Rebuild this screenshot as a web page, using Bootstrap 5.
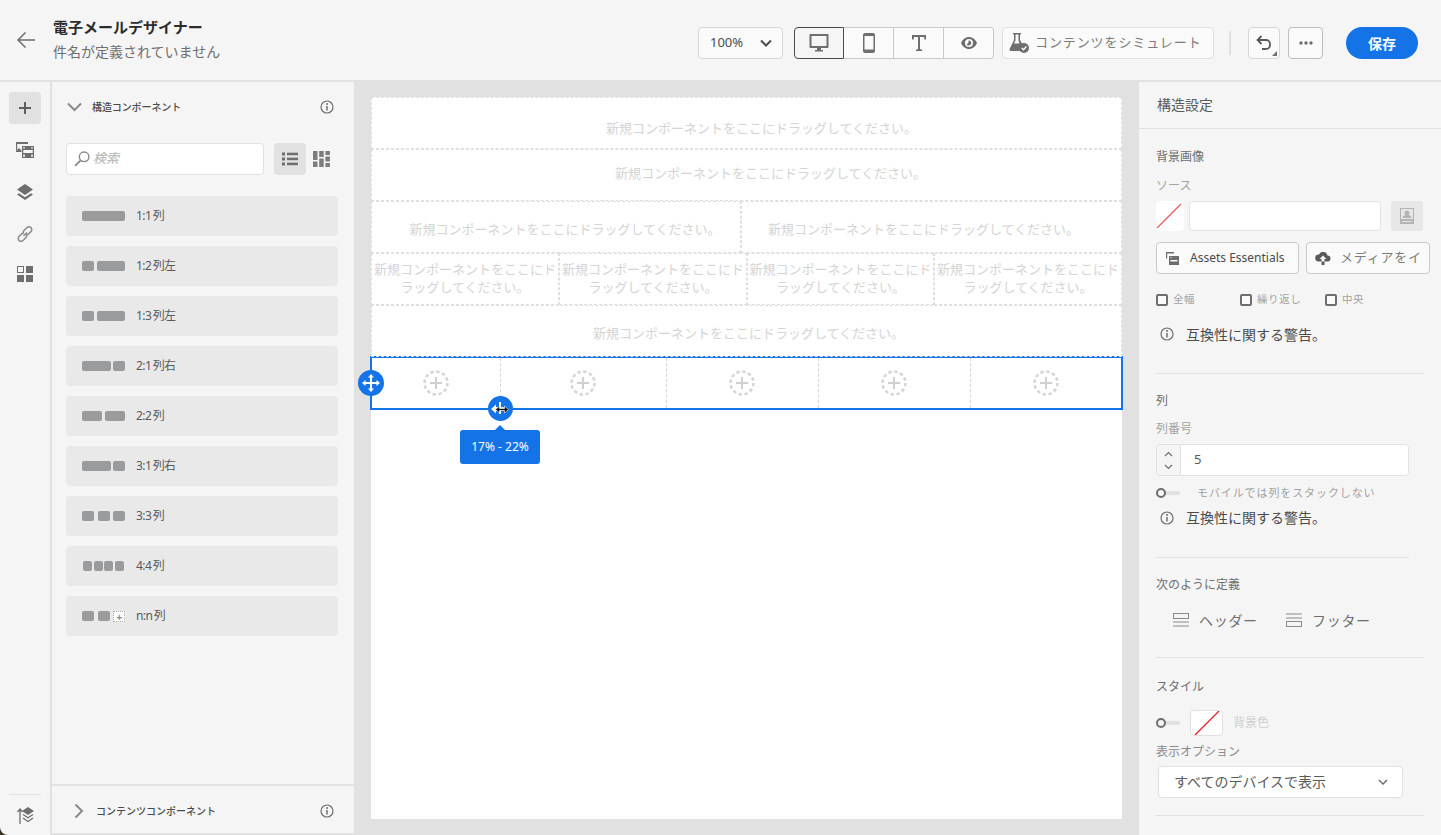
<!DOCTYPE html>
<html lang="ja">
<head>
<meta charset="utf-8">
<title>電子メールデザイナー</title>
<link href="https://cdn.jsdelivr.net/npm/bootstrap@5.3.0/dist/css/bootstrap.min.css" rel="stylesheet">
<style>
html,body{margin:0;height:835px;overflow:hidden;background:#3a3428}
body{font-family:"Noto Sans","Noto Sans CJK JP",sans-serif;color:#4b4b4b}
.shell{width:1441px;height:835px;overflow:hidden;background:#f5f5f5;position:relative;border-bottom-left-radius:8px}
svg{display:block;flex:none}
.ic{fill:#6e6e6e}
.topbar{height:82px;border-bottom:2px solid #e1e1e1;padding:0 23px 0 16px}
.backlink{width:20px;margin:0 17px 0 0}
.ttl{font-size:15px;line-height:20px;font-weight:700;color:#2c2c2c;margin-top:-2px}
.subttl{font-size:14px;line-height:20px;color:#6e6e6e;margin-top:5px}
.toolwrap{margin-top:6px}
.tbtn{height:32px;padding:0;border:2px solid #d6d6d6;border-radius:4px;background:#fafafa;color:#4b4b4b;display:flex;align-items:center;justify-content:center;font-size:13px}
.zoomsel{width:85px;margin-left:0;justify-content:space-between;padding:0 10px 0 11px;border-width:1px}
.segs{margin-left:11px;display:flex}
.segs .tbtn{width:50px;border-radius:0;border-width:1px 1px 1px 0;border-color:#cacaca}
.segs .tbtn:first-child{border:1px solid #4b4b4b;border-radius:4px 0 0 4px;background:#f5f5f5}
.segs .tbtn:last-child{border-radius:0 4px 4px 0}
.simbtn{width:212px;margin-left:8px;border-width:1px;border-color:#e1e1e1;color:#7b7b7b;gap:6px;letter-spacing:.9px;justify-content:flex-start;padding-left:6px}
.vsep{width:2px;height:24px;background:#e1e1e1;margin:0 17px 0 15px}
.undo{width:32px;position:relative;border-width:1px}
.undo:after{content:"";position:absolute;right:2px;bottom:2px;border:solid transparent;border-width:0 0 5px 5px;border-bottom-color:#6e6e6e}
.morebtn{width:35px;margin-left:8px;border-width:1px;border-color:#bdbdbd}
.savebtn{width:72px;height:32px;margin-left:23px;padding:0;background:#1473e6;color:#fff;border:0;border-radius:16px;font-size:14px;font-weight:700}
.work{height:753px}
.railcol{width:52px;border-right:2px solid #e1e1e1;padding-top:10px}
.railbtn{width:32px;height:32px;margin:0 auto;display:flex;align-items:center;justify-content:center;border-radius:4px}
.railbtn.on{background:#e1e1e1}
.railgap{margin-top:10px}
.railgap8{margin-top:8px}
.rail-sep{width:32px;height:1px;background:#e1e1e1;margin:0 auto 4px}
.leftcol{width:303px;height:753px;border-right:1px solid #e1e1e1;border-bottom:2px solid #e1e1e1}
.sechead{height:52px;padding:0 20px 2px 15px;font-size:10px;font-weight:500;color:#4b4b4b;letter-spacing:-.1px}
.chev{margin-right:10px}
.searchrow{padding:9px 16px 0 14px;margin-bottom:21px}
.searchbox{width:198px;height:32px;background:#fff;border:1px solid #e1e1e1;border-radius:4px;padding:0 7px;color:#b3b3b3;font-size:13px;font-style:italic;gap:3px}
.viewbtn{width:32px;height:32px;border-radius:4px;margin-left:10px}
.viewbtn.on{background:#e1e1e1}
.viewalt{margin-left:7px}
.colitem{height:40px;width:272px;margin:0 0 10px 14px;background:#e9e9e9;border-radius:4px;padding-left:16px;font-size:12px;color:#5a5a5a;letter-spacing:-.6px;word-spacing:-1px}
.thumb{width:43px;margin-right:11px;display:flex;justify-content:space-between;height:10px}
.thumb4{padding:0 1px}
.thumb i{display:block;height:10px;background:#999b9c;border-radius:2px}
.w43{width:43px}.w29{width:28.5px}.w12{width:12px}.w9{width:9px}.w20{width:20px}
.addcell{width:12px;height:11px;background:#fff;border:1px dotted #aaa;display:flex;align-items:center;justify-content:center;color:#888;font-size:10px;line-height:1;font-weight:700}
.leftfoot{border-top:2px solid #e1e1e1;height:49px;padding:3px 20px 0 22px;font-size:10px;font-weight:500;color:#4b4b4b}
.footchev{margin-right:12px}
.canvas{width:784px;height:753px;background:#e1e1e1;padding:15px 16px 16px;position:relative}
.sheet{background:#fff;height:722px;width:751px}
.droprow{display:flex;height:52px}
.dropcell{flex:1 1 0;min-width:0;border:1px dashed #dfdfdf;display:flex;align-items:center;justify-content:center;text-align:center;color:#d4d4d4;font-size:13px;line-height:18px}
.p-a{padding:9px 0 0 30px}.p-b{padding:0 0 4px 48px}.p-c{padding:4px 0 0 18px}.p-d{padding:4px 16px 0 0}.p-e{padding:4px 0 0 4px}.p-f{padding:0 0 2px}
.narrow{flex:0 0 auto}
.c187{width:187px}.c188{width:188px}
.c370{width:370px}
.selrow{display:flex;height:54px;margin:-1px 0 0 -1px;width:753px;border:2px solid #1473e6}
.plcell{border-right:1px dashed #d4d4d4;display:flex;align-items:center;justify-content:center}
.plcell:last-child{border-right:0}
.c127{width:129px}.c166{width:166px;padding-right:2px}.c152{width:152px;padding-right:2px}.c150{flex:1 1 0}
.handle{position:absolute;background:#1473e6;border-radius:50%;display:flex;align-items:center;justify-content:center}
.h-move{left:3px;top:288px;width:26px;height:26px}
.h-size{left:133px;top:314px;width:25px;height:25px}
.tipbox{position:absolute;left:105px;top:348px;width:80px;height:34px;border-radius:3px;background:#1473e6;color:#fff;font-size:12px;display:flex;align-items:center;justify-content:center}
.tipbox:before{content:"";position:absolute;left:35px;top:-5px;border:solid transparent;border-width:0 5px 5px 5px;border-bottom-color:#1473e6}
.rightcol{width:302px;height:753px;overflow:hidden;position:relative}
.rhead{height:47px;border-bottom:1px solid #e1e1e1;padding-left:18px;font-size:14px;line-height:46px;color:#5a5a5a}
.rbody{padding-left:17px}
.lab{font-size:12px;line-height:18px;color:#6e6e6e}
.lab2{font-size:12px;line-height:18px;color:#a3a3a3}
.labdim{color:#cfcfcf;margin-left:10px}
.labmid{color:#8a8a8a}
.sp5{margin-top:5px}.sp6{margin-top:6px}.sp7{margin-top:7px}.sp9{margin-top:9px}.sp10{margin-top:10px}.sp11{margin-top:11px}.sp14{margin-top:14px}.sp16{margin-top:16px}.sp17{margin-top:17px}.sp18{margin-top:18px}.sp19{margin-top:19px}.sp20{margin-top:20px}.sp26{margin-top:26px}.sp29{margin-top:29px}
.swatch{width:28px;height:30px;background:#fff;border-radius:4px}
.urlbox{width:192px;height:30px;margin-left:5px;background:#fff;border:1px solid #e1e1e1;border-radius:4px;padding:0}
.imgbtn{width:32px;height:30px;margin-left:10px;background:#e7e7e7;border-radius:4px}
.assetbtn{height:32px;width:143px;border:1px solid #cacaca;border-radius:4px;background:#fafafa;font-size:12px;color:#4b4b4b;gap:11px;padding:0 0 0 9px}
.mediabtn{height:32px;width:124px;margin-left:7px;border:1px solid #cacaca;border-radius:4px;background:#fafafa;font-size:13px;color:#7b7b7b;gap:9px;padding:0 0 0 8px;white-space:nowrap;letter-spacing:.8px}
.chk{width:12px;height:12px;border:2px solid #6e6e6e;border-radius:2px;margin-right:5px;background:#fafafa}
.chkl{font-size:10.5px;color:#a3a3a3;height:16px;letter-spacing:.6px}
.ck84{width:84px}.ck85{width:85px}
.warn{height:20px;padding-left:4px;font-size:14px;color:#4b4b4b;gap:12px}
.hrule{height:1px;background:#e1e1e1}
.w268{width:268px}.w253{width:253px}
.numbox{width:253px;height:32px;border:1px solid #e1e1e1;border-radius:4px;overflow:hidden}
.numsp{width:24px;background:#f5f5f5;border-right:1px solid #e1e1e1;padding:5px 0;gap:7px}
.numv{background:#fff;font-size:13px;padding-left:13px;color:#5a5a5a}
.togl{width:24px;height:14px;position:relative}
.togl:before{content:"";position:absolute;left:4px;right:0;top:5px;height:4px;border-radius:2px;background:#e1e1e1}
.togl:after{content:"";position:absolute;left:0;top:2px;width:10px;height:10px;border-radius:50%;border:2.5px solid #6e6e6e;background:#f5f5f5}
.togtxt{font-size:11px;color:#a3a3a3;margin-left:17px;letter-spacing:.9px}
.defrow{padding-left:17px}
.deftxt{font-size:14px;color:#6e6e6e;letter-spacing:.7px;margin-left:10px}
.hdrtxt{width:87px}
.stylesw{width:33px;height:26px;margin-left:10px;background:#fff;border:1px solid #e1e1e1;border-radius:4px}
.sel{width:245px;height:32px;margin-left:2px;background:#fff;border:1px solid #e1e1e1;border-radius:4px;padding:0 14px 0 15px;font-size:14px;color:#5a5a5a}
</style>
</head>
<body>
<div class="shell d-flex flex-column">

<header class="topbar d-flex align-items-center">
  <a class="backlink" aria-label="戻る"><svg width="20" height="18" viewBox="0 0 20 18"><path d="M19 9H2M9.500 1.500 2 9l7.500 7.500" fill="none" stroke="#6e6e6e" stroke-width="1.500"/></svg></a>
  <div class="flex-grow-1">
    <div class="ttl">電子メールデザイナー</div>
    <div class="subttl">件名が定義されていません</div>
  </div>
  <div class="toolwrap d-flex align-items-center">
  <button class="btn tbtn zoomsel" type="button"><span>100%</span><svg width="12" height="8" viewBox="0 0 12 8"><path d="M1 1.500 6 6.500l5-5" fill="none" stroke="#4b4b4b" stroke-width="2"/></svg></button>
  <div class="segs">
    <button class="btn tbtn" type="button" aria-label="デスクトップ"><svg width="20" height="18" viewBox="0 0 20 18"><path class="ic" fill-rule="evenodd" d="M1.500 0h17a1 1 0 0 1 1 1v12a1 1 0 0 1-1 1H12v2h2v1.500H6V16h2v-2H1.500a1 1 0 0 1-1-1V1a1 1 0 0 1 1-1Zm1 2v10h15V2Z"/></svg></button>
    <button class="btn tbtn" type="button" aria-label="モバイル"><svg width="12" height="20" viewBox="0 0 12 20"><path class="ic" fill-rule="evenodd" d="M2 0h8a2 2 0 0 1 2 2v16a2 2 0 0 1-2 2H2a2 2 0 0 1-2-2V2a2 2 0 0 1 2-2Zm-.5 3v13.500h9V3Z"/></svg></button>
    <button class="btn tbtn" type="button" aria-label="テキスト"><svg width="16" height="18" viewBox="0 0 16 18"><path class="ic" d="M1 1h14v4.500h-1.600L13 3H9v12l2 .8V17H5v-1.200l2-.8V3H3L2.600 5.500H1Z"/></svg></button>
    <button class="btn tbtn" type="button" aria-label="プレビュー"><svg width="16" height="12" viewBox="0 0 16 12"><path class="ic" fill-rule="evenodd" d="M8 0c3.500 0 6.500 2.500 8 6-1.500 3.500-4.500 6-8 6S1.500 9.500 0 6c1.500-3.500 4.500-6 8-6Zm0 2a4 4 0 1 0 0 8 4 4 0 0 0 0-8Zm-.5 1.500a2.500 2.500 0 1 1-2 3.500c1 .2 2.400-.8 2-3.500Z"/></svg></button>
  </div>
  <button class="btn tbtn simbtn" type="button"><svg width="20" height="20" viewBox="0 0 20 20"><path class="ic" d="M4 0h8v1.500h-1V7l2.500 4.500a5 5 0 0 0-2 6.500H2a1.500 1.500 0 0 1-1.300-2.200L5 7V1.500H4Zm2.500 1.500v6L5 10.500h5.500L9.500 7.500v-6Z" fill-rule="evenodd"/><circle cx="15" cy="15" r="5" fill="#6e6e6e"/><path d="m12.800 15 1.700 1.700 2.900-3.200" fill="none" stroke="#fff" stroke-width="1.300"/></svg><span>コンテンツをシミュレート</span></button>
  <div class="vsep"></div>
  <button class="btn tbtn undo" type="button" aria-label="元に戻す"><svg width="16" height="16" viewBox="0 0 16 16"><path d="M5.500 1 1.500 5l4 4M2 5h8a4 4 0 0 1 4 4v1a4 4 0 0 1-4 4H6" fill="none" stroke="#5a5a5a" stroke-width="1.800"/></svg></button>
  <button class="btn tbtn morebtn" type="button" aria-label="その他"><svg width="14" height="4" viewBox="0 0 14 4"><circle cx="2" cy="2" r="1.700" fill="#6e6e6e"/><circle cx="7" cy="2" r="1.700" fill="#6e6e6e"/><circle cx="12" cy="2" r="1.700" fill="#6e6e6e"/></svg></button>
  <button class="btn savebtn" type="button">保存</button>
  </div>
</header>

<div class="work d-flex">
  <nav class="railcol d-flex flex-column">
    <div class="railbtn on"><svg width="14" height="14" viewBox="0 0 14 14"><path d="M7 1v12M1 7h12" stroke="#5f5f5f" stroke-width="2"/></svg></div>
    <div class="railbtn railgap"><svg width="18" height="16" viewBox="0 0 18 16"><path class="ic" d="M0 0h12v2H1.200v5.500L0 9Z"/><path class="ic" d="M0 9l3-3 2.500 2.500V10H0Z"/><path class="ic" fill-rule="evenodd" d="M6 4h12v12H6Zm1.300 1v1.500h1.500V5Zm0 3v3h9.400V8Zm0 4.500V15h1.500v-2.500Zm8 0V15h1.400v-2.500Zm0-7.500v1.500h1.400V5Z"/></svg></div>
    <div class="railbtn railgap"><svg width="16" height="16" viewBox="0 0 16 16"><path class="ic" d="M8 0l8 5.500-8 5.500-8-5.500Z"/><path class="ic" d="M2 9.200l6 4.100 6-4.100 2 1.300L8 16l-8-5.500Z"/></svg></div>
    <div class="railbtn railgap"><svg width="18" height="18" viewBox="0 0 18 18"><path d="M7.500 11 11 7.500M6.500 8 2.500 12a3 3 0 0 0 4 4l3.500-3.500a3 3 0 0 0 .5-3.500M11.500 10l4-4a3 3 0 0 0-4-4L8 5.500a3 3 0 0 0-.5 3.500" fill="none" stroke="#8a8a8a" stroke-width="1.500"/></svg></div>
    <div class="railbtn railgap8"><svg width="16" height="16" viewBox="0 0 16 16"><rect x=".5" y=".5" width="6" height="6" fill="none" stroke="#6e6e6e"/><rect x="9" width="7" height="7" class="ic"/><rect y="9" width="7" height="7" class="ic"/><rect x="9" y="9" width="7" height="7" class="ic"/></svg></div>
    <div class="mt-auto pb-1">
      <div class="rail-sep"></div>
      <div class="railbtn"><svg width="17" height="17" viewBox="0 0 17 17"><path d="M3 17V3M.5 5 3 2l2.500 3" fill="none" stroke="#6e6e6e" stroke-width="1.300"/><path class="ic" d="M11 0l6 4-6 4-6-4Z"/><path d="m6 7.500 5 3.300 5-3.300M6 11l5 3.500 5-3.500" fill="none" stroke="#6e6e6e" stroke-width="1.300"/></svg></div>
    </div>
  </nav>

  <aside class="leftcol d-flex flex-column">
    <div class="sechead d-flex align-items-center">
      <svg class="chev" width="15" height="10" viewBox="0 0 15 10"><path d="M1 1.500 7.500 8 14 1.500" fill="none" stroke="#8a8a8a" stroke-width="2"/></svg>
      <span class="flex-grow-1">構造コンポーネント</span>
      <svg width="14" height="14" viewBox="0 0 14 14"><circle cx="7" cy="7" r="6" fill="none" stroke="#6e6e6e" stroke-width="1.200"/><path d="M7 6v4.500" stroke="#6e6e6e" stroke-width="1.500"/><circle cx="7" cy="4" r="1" fill="#6e6e6e"/></svg>
    </div>
    <div class="searchrow d-flex align-items-center">
      <div class="searchbox d-flex align-items-center">
        <svg width="16" height="16" viewBox="0 0 15 15"><circle cx="9.500" cy="5.500" r="4.500" fill="none" stroke="#8a8a8a" stroke-width="1.300"/><path d="M6 9 1 14" stroke="#8a8a8a" stroke-width="1.800"/></svg>
        <span>検索</span>
      </div>
      <div class="viewbtn on d-flex align-items-center justify-content-center"><svg width="16" height="14" viewBox="0 0 16 14"><g fill="#6e6e6e"><rect width="3" height="3" y=".5"/><rect x="5" width="11" height="2.500" y=".7"/><rect width="3" height="3" y="5.500"/><rect x="5" width="11" height="2.500" y="5.700"/><rect width="3" height="3" y="10.500"/><rect x="5" width="11" height="2.500" y="10.700"/></g></svg></div>
      <div class="viewalt"><svg width="17" height="16" viewBox="0 0 17 16"><g fill="#7c7c7c"><rect width="4.500" height="9"/><rect x="6.200" width="4.500" height="6"/><rect x="12.400" width="4.500" height="4"/><rect y="10.500" width="4.500" height="5.500"/><rect x="6.200" y="7.500" width="4.500" height="8.500"/><rect x="12.400" y="5.500" width="4.500" height="5"/><rect x="12.400" y="12" width="4.500" height="4"/></g></svg></div>
    </div>
    <div class="colitem d-flex align-items-center"><div class="thumb"><i class="w43"></i></div><span>1:1 列</span></div>
    <div class="colitem d-flex align-items-center"><div class="thumb"><i class="w12"></i><i class="w29"></i></div><span>1:2 列左</span></div>
    <div class="colitem d-flex align-items-center"><div class="thumb"><i class="w12"></i><i class="w29"></i></div><span>1:3 列左</span></div>
    <div class="colitem d-flex align-items-center"><div class="thumb"><i class="w29"></i><i class="w12"></i></div><span>2:1 列右</span></div>
    <div class="colitem d-flex align-items-center"><div class="thumb"><i class="w20"></i><i class="w20"></i></div><span>2:2 列</span></div>
    <div class="colitem d-flex align-items-center"><div class="thumb"><i class="w29"></i><i class="w12"></i></div><span>3:1 列右</span></div>
    <div class="colitem d-flex align-items-center"><div class="thumb"><i class="w12"></i><i class="w12"></i><i class="w12"></i></div><span>3:3 列</span></div>
    <div class="colitem d-flex align-items-center"><div class="thumb thumb4"><i class="w9"></i><i class="w9"></i><i class="w9"></i><i class="w9"></i></div><span>4:4 列</span></div>
    <div class="colitem d-flex align-items-center"><div class="thumb"><i class="w12"></i><i class="w12"></i><span class="addcell">+</span></div><span>n:n 列</span></div>
    <div class="leftfoot mt-auto d-flex align-items-center">
      <svg class="footchev" width="10" height="16" viewBox="0 0 10 16"><path d="M1.500 1.500 8 8l-6.500 6.500" fill="none" stroke="#8a8a8a" stroke-width="2"/></svg>
      <span class="flex-grow-1">コンテンツコンポーネント</span>
      <svg width="14" height="14" viewBox="0 0 14 14"><circle cx="7" cy="7" r="6" fill="none" stroke="#6e6e6e" stroke-width="1.200"/><path d="M7 6v4.500" stroke="#6e6e6e" stroke-width="1.500"/><circle cx="7" cy="4" r="1" fill="#6e6e6e"/></svg>
    </div>
  </aside>

  <main class="canvas">
    <div class="sheet">
      <div class="droprow"><div class="dropcell p-a">新規コンポーネントをここにドラッグしてください。</div></div>
      <div class="droprow"><div class="dropcell p-b">新規コンポーネントをここにドラッグしてください。</div></div>
      <div class="droprow"><div class="dropcell narrow c370 p-c">新規コンポーネントをここにドラッグしてください。</div><div class="dropcell p-d">新規コンポーネントをここにドラッグしてください。</div></div>
      <div class="droprow"><div class="dropcell narrow c188 p-f">新規コンポーネントをここにドラッグしてください。</div><div class="dropcell narrow c188 p-f">新規コンポーネントをここにドラッグしてください。</div><div class="dropcell narrow c187 p-f">新規コンポーネントをここにドラッグしてください。</div><div class="dropcell p-f">新規コンポーネントをここにドラッグしてください。</div></div>
      <div class="droprow"><div class="dropcell p-e">新規コンポーネントをここにドラッグしてください。</div></div>
      <div class="selrow">
        <div class="plcell c127"><svg width="26" height="26" viewBox="0 0 26 26"><circle cx="13" cy="13" r="11.500" fill="none" stroke="#d6d6d6" stroke-width="2.500" stroke-dasharray="3.500 2.500"/><path d="M13 7v12M7 13h12" stroke="#cfcfcf" stroke-width="2"/></svg></div>
        <div class="plcell c166"><svg width="26" height="26" viewBox="0 0 26 26"><circle cx="13" cy="13" r="11.500" fill="none" stroke="#d6d6d6" stroke-width="2.500" stroke-dasharray="3.500 2.500"/><path d="M13 7v12M7 13h12" stroke="#cfcfcf" stroke-width="2"/></svg></div>
        <div class="plcell c152"><svg width="26" height="26" viewBox="0 0 26 26"><circle cx="13" cy="13" r="11.500" fill="none" stroke="#d6d6d6" stroke-width="2.500" stroke-dasharray="3.500 2.500"/><path d="M13 7v12M7 13h12" stroke="#cfcfcf" stroke-width="2"/></svg></div>
        <div class="plcell c152"><svg width="26" height="26" viewBox="0 0 26 26"><circle cx="13" cy="13" r="11.500" fill="none" stroke="#d6d6d6" stroke-width="2.500" stroke-dasharray="3.500 2.500"/><path d="M13 7v12M7 13h12" stroke="#cfcfcf" stroke-width="2"/></svg></div>
        <div class="plcell c150"><svg width="26" height="26" viewBox="0 0 26 26"><circle cx="13" cy="13" r="11.500" fill="none" stroke="#d6d6d6" stroke-width="2.500" stroke-dasharray="3.500 2.500"/><path d="M13 7v12M7 13h12" stroke="#cfcfcf" stroke-width="2"/></svg></div>
      </div>
    </div>
    <div class="handle h-move"><svg width="18" height="18" viewBox="0 0 18 18"><path d="M9 1v16M1 9h16" stroke="#fff" stroke-width="2"/><path d="M9 0l3 3.500H6ZM9 18l3-3.500H6ZM0 9l3.500-3v6ZM18 9l-3.500-3v6Z" fill="#fff"/></svg></div>
    <div class="handle h-size"><svg width="22" height="16" viewBox="0 0 22 16"><path d="M1 8l5-4.500V6h3V1h2v12H9V10H6v2.500Z" fill="#fff"/><path d="M7 8h9" stroke="#fff" stroke-width="3.500"/><path d="M5.500 8.500 9.500 5v2.500h5V5l4 3.500-4 3.500V9.500h-5V12Z" fill="#111" stroke="#fff" stroke-width=".6"/></svg></div>
    <div class="tipbox">17% - 22%</div>
  </main>

  <aside class="rightcol">
    <div class="rhead">構造設定</div>
    <div class="rbody">
      <div class="lab sp19">背景画像</div>
      <div class="lab2 sp11">ソース</div>
      <div class="d-flex sp6">
        <div class="swatch"><svg width="28" height="30" viewBox="0 0 28 30"><path d="M1 27 25 3" stroke="#ef5a5a" stroke-width="1.200"/></svg></div>
        <div class="form-control urlbox"></div>
        <div class="imgbtn d-flex align-items-center justify-content-center"><svg width="14" height="16" viewBox="0 0 14 16"><path fill="#b3b3b3" fill-rule="evenodd" d="M0 0h14v16H0Zm1 1v10h12V1Zm6 1.500a2.500 2.500 0 0 1 1.500 4.500c1.500.5 3 1.200 3 3H2.500c0-1.800 1.500-2.500 3-3A2.500 2.500 0 0 1 7 2.500ZM2 13v1h10v-1Z"/></svg></div>
      </div>
      <div class="d-flex sp11">
        <button class="btn assetbtn d-flex align-items-center" type="button"><svg width="13" height="13" viewBox="0 0 13 13"><path class="ic" d="M0 0h8v1.500H1.200V6L0 7Z"/><path class="ic" fill-rule="evenodd" d="M3 4h10v9H3Zm1.500 1v1h1V5Zm0 3v1.500h7V8Z"/></svg><span>Assets Essentials</span></button>
        <button class="btn mediabtn d-flex align-items-center justify-content-start" type="button"><svg width="16" height="14" viewBox="0 0 16 14"><path d="M12.500 4.500A4.500 4.500 0 0 0 4 3.500 3.500 3.500 0 0 0 3.500 10.500H6.500V8H4.500L8 4.500 11.500 8H9.500v6h-3v-3.500H12.500a3 3 0 0 0 0-6Z" fill="#5a5a5a"/></svg><span>メディアをイ</span></button>
      </div>
      <div class="d-flex sp18">
        <div class="chkl ck84 d-flex align-items-center"><span class="chk"></span>全幅</div>
        <div class="chkl ck85 d-flex align-items-center"><span class="chk"></span>繰り返し</div>
        <div class="chkl d-flex align-items-center"><span class="chk"></span>中央</div>
      </div>
      <div class="warn d-flex align-items-center sp16"><svg width="14" height="14" viewBox="0 0 14 14"><circle cx="7" cy="7" r="6" fill="none" stroke="#6e6e6e" stroke-width="1.200"/><path d="M7 6v4.500" stroke="#6e6e6e" stroke-width="1.500"/><circle cx="7" cy="4" r="1" fill="#6e6e6e"/></svg><span>互換性に関する警告。</span></div>
      <div class="hrule w268 sp29"></div>
      <div class="lab sp18">列</div>
      <div class="lab2 sp10">列番号</div>
      <div class="numbox d-flex sp6">
        <div class="numsp d-flex flex-column align-items-center justify-content-center"><svg width="9" height="6" viewBox="0 0 9 6"><path d="M1 5l3.500-3.500L8 5" fill="none" stroke="#6e6e6e" stroke-width="1.200"/></svg><svg width="9" height="6" viewBox="0 0 9 6"><path d="M1 1l3.500 3.500L8 1" fill="none" stroke="#6e6e6e" stroke-width="1.200"/></svg></div>
        <div class="numv flex-grow-1 d-flex align-items-center">5</div>
      </div>
      <div class="d-flex align-items-center sp9"><span class="togl"></span><span class="togtxt">モバイルでは列をスタックしない</span></div>
      <div class="warn d-flex align-items-center sp6"><svg width="14" height="14" viewBox="0 0 14 14"><circle cx="7" cy="7" r="6" fill="none" stroke="#6e6e6e" stroke-width="1.200"/><path d="M7 6v4.500" stroke="#6e6e6e" stroke-width="1.500"/><circle cx="7" cy="4" r="1" fill="#6e6e6e"/></svg><span>互換性に関する警告。</span></div>
      <div class="hrule w253 sp29"></div>
      <div class="lab sp18">次のように定義</div>
      <div class="defrow d-flex align-items-center sp16">
        <svg width="16" height="14" viewBox="0 0 16 14"><rect x=".5" y=".5" width="15" height="5" fill="none" stroke="#8a8a8a"/><path d="M0 9h16M0 13h16" stroke="#8a8a8a"/></svg>
        <span class="deftxt hdrtxt">ヘッダー</span>
        <svg width="16" height="14" viewBox="0 0 16 14"><path d="M0 1h16M0 5h16" stroke="#8a8a8a"/><rect x=".5" y="8.500" width="15" height="5" fill="none" stroke="#8a8a8a"/></svg>
        <span class="deftxt">フッター</span>
      </div>
      <div class="hrule w268 sp26"></div>
      <div class="lab sp20">スタイル</div>
      <div class="d-flex align-items-center sp14"><span class="togl"></span><div class="stylesw"><svg width="31" height="24" viewBox="0 0 31 24"><path d="M4 24 28 0" stroke="#e81f1f" stroke-width="1.300"/></svg></div><span class="lab2 labdim">背景色</span></div>
      <div class="lab2 labmid sp7">表示オプション</div>
      <div class="sel d-flex align-items-center justify-content-between sp5"><span>すべてのデバイスで表示</span><svg width="10" height="6" viewBox="0 0 10 6"><path d="M1 1l4 4 4-4" fill="none" stroke="#6e6e6e" stroke-width="1.500"/></svg></div>
      <div class="hrule w268 sp17"></div>
    </div>
  </aside>
</div>
</div>
<script src="https://cdn.jsdelivr.net/npm/bootstrap@5.3.0/dist/js/bootstrap.bundle.min.js"></script>
</body>
</html>
